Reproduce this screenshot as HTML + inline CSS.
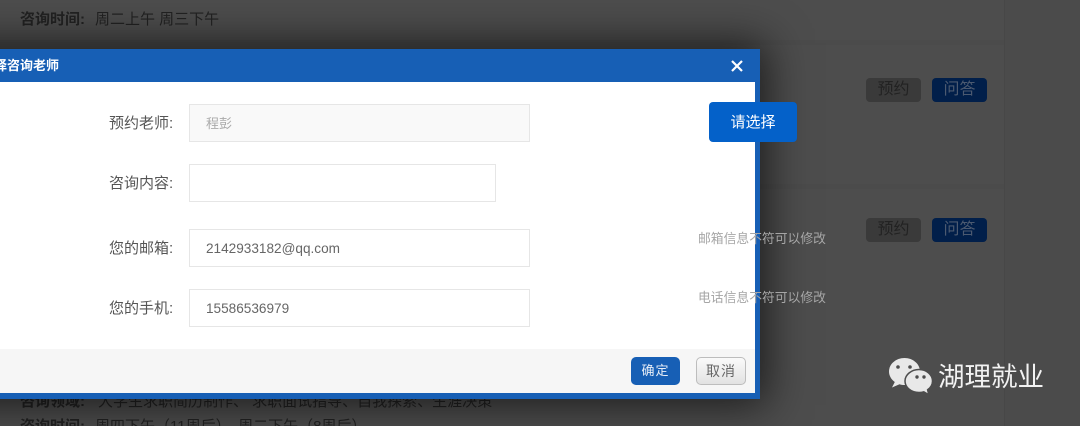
<!DOCTYPE html>
<html lang="zh"><head><meta charset="utf-8"><style>
html,body{margin:0;padding:0;width:1080px;height:426px;overflow:hidden}
body{font-family:"Liberation Sans","Noto Sans CJK SC",sans-serif}
div,span{position:absolute;white-space:nowrap;box-sizing:border-box}
#w{left:0;top:0;width:1080px;height:426px;overflow:hidden;background:#4d4d4d}
.bg{font-size:15px;line-height:20px;color:#222}
.bg b{font-weight:700}
.btn{width:55px;height:24px;border-radius:4px;text-align:center;font-size:16px;line-height:24px}
.lab{left:109px;font-size:15px;line-height:20px;color:#555}
.inp{left:189px;width:341px;height:38px;border:1px solid #e6e6e6;background:#fff;font-size:13.6px;line-height:37px;padding-left:16px;color:#666}
.tip{left:698px;font-size:12.8px;line-height:18px;color:#a6a6a6}
</style></head><body><div id="w">
<div style="left:1004px;top:0;width:1px;height:426px;background:#474747"></div>
<div style="left:1005px;top:0;width:75px;height:426px;background:#4b4b4b"></div>
<div style="left:0;top:40px;width:1004px;height:5px;background:#4b4b4b"></div>
<div style="left:0;top:184px;width:1004px;height:5px;background:#4b4b4b"></div>
<div class="bg" style="left:20px;top:10px"><b>咨询时间:</b></div>
<div class="bg" style="left:95px;top:10px">周二上午 周三下午</div>
<div class="btn" style="left:866px;top:78px;background:#3a3a3a;color:#222">预约</div>
<div class="btn" style="left:932px;top:78px;background:#011f4a;color:#4c5a70">问答</div>
<div class="btn" style="left:866px;top:218px;background:#3a3a3a;color:#222">预约</div>
<div class="btn" style="left:932px;top:218px;background:#011f4a;color:#4c5a70">问答</div>
<div class="bg" style="left:20px;top:392px"><b>咨询领域:</b></div>
<div class="bg" style="left:98px;top:392px">大学生求职简历制作、 求职面试指导、自我探索、生涯决策</div>
<div class="bg" style="left:20px;top:417px"><b>咨询时间:</b></div>
<div class="bg" style="left:95px;top:417px">周四下午（11周后）、周二下午（8周后）</div>

<div style="left:-60px;top:49px;width:820px;height:350px;background:#175fb5;box-shadow:0 0 40px 6px rgba(0,0,0,.65)"></div>
<div style="left:-20px;top:82px;width:775px;height:311px;background:#fff"></div>
<div style="left:-20px;top:349px;width:775px;height:44px;background:#f6f6f6"></div>
<div style="left:-6px;top:57px;font-size:13px;line-height:18px;font-weight:700;color:#fff">择咨询老师</div>
<svg style="position:absolute;left:730px;top:59px" width="14" height="14" viewBox="0 0 14 14"><path d="M2 2L12 12M12 2L2 12" stroke="#fff" stroke-width="2.2" fill="none"/></svg>

<div class="lab" style="top:114px">预约老师:</div>
<div class="inp" style="top:104px;background:#f9f9f9;color:#aaa;font-size:13px;line-height:38px">程彭</div>
<div class="lab" style="top:174px">咨询内容:</div>
<div class="inp" style="top:164px;width:307px"></div>
<div class="lab" style="top:239px">您的邮箱:</div>
<div class="inp" style="top:229px">2142933182@qq.com</div>
<div class="lab" style="top:299px">您的手机:</div>
<div class="inp" style="top:289px">15586536979</div>
<div class="tip" style="top:230px">邮箱信息不符可以修改</div>
<div class="tip" style="top:289px">电话信息不符可以修改</div>

<div style="left:709px;top:102px;width:88px;height:40px;background:#0461c9;border-radius:4px;color:#fff;font-size:15px;line-height:42px;text-align:center">请选择</div>

<div style="left:631px;top:357px;width:49px;height:28px;background:#175fb5;border-radius:5px;color:#e8eef7;font-size:13px;line-height:28px;text-align:center;letter-spacing:1px">确定</div>
<div style="left:696px;top:357px;width:50px;height:28px;border:1px solid #bdbdbd;background:linear-gradient(#fafafa,#e2e2e2);border-radius:5px;color:#666;font-size:14px;line-height:27px;text-align:center;letter-spacing:1px">取消</div>

<svg style="position:absolute;left:888px;top:356px" width="46" height="40" viewBox="0 0 46 40">
<path d="M16.500 2C8 2 1 8 1 15.500c0 4.300 2.300 8 5.800 10.500L4 31.500l7.500-3.300c1.600.5 3.300.8 5 .8 8.500 0 15.500-6 15.500-13.500S25 2 16.500 2z" fill="#e8e8e8"/>
<path d="M44.500 25c0-6.300-6-11.500-13.500-11.500S17 18.700 17 25s6 11.500 14 11.500c1.700 0 3.300-.2 4.800-.7l5 3-1.200-5c3-2.100 4.900-5.200 4.900-8.800z" fill="#e8e8e8" stroke="#4d4d4d" stroke-width="1.500"/>
<circle cx="10" cy="11" r="1.800" fill="#4d4d4d"/><circle cx="22" cy="11" r="1.800" fill="#4d4d4d"/>
<circle cx="29" cy="21" r="1.700" fill="#4d4d4d"/><circle cx="36" cy="21" r="1.700" fill="#4d4d4d"/>
</svg>
<div style="left:938px;top:360px;font-size:26.500px;line-height:34px;color:#f2f2f2">湖理就业</div>
</div></body></html>
